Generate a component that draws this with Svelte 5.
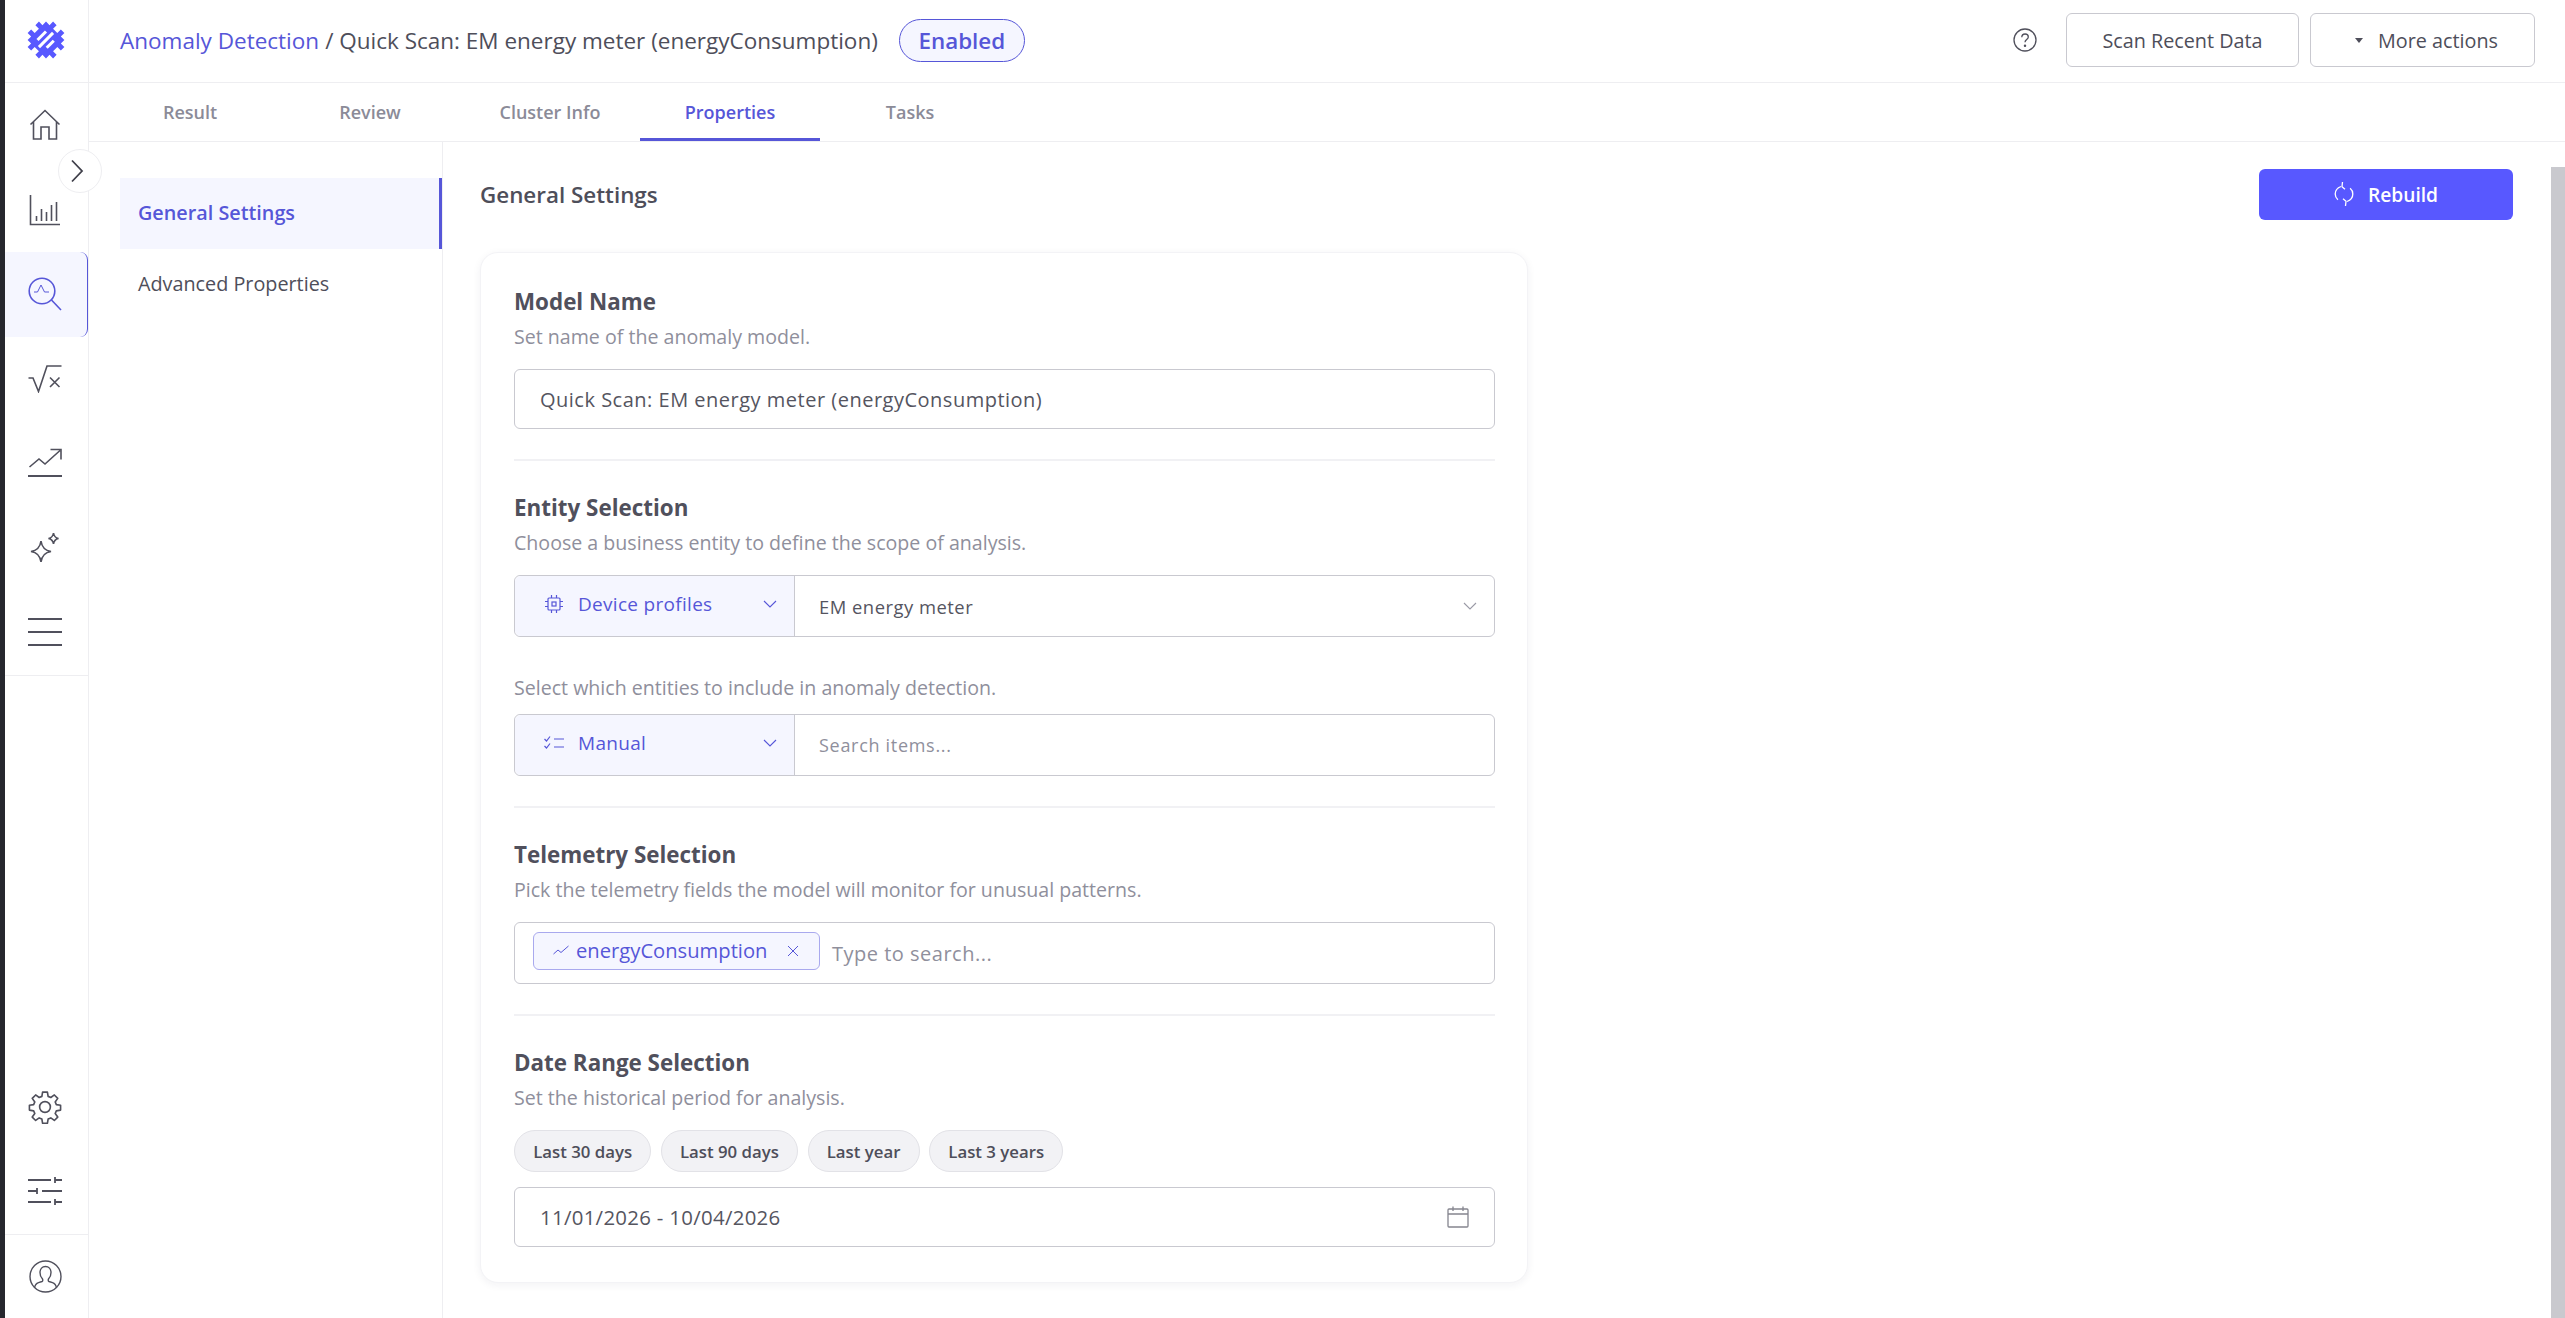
<script>
  const tabs = ['Result', 'Review', 'Cluster Info', 'Properties', 'Tasks'];
  const activeTab = 'Properties';
  const ranges = ['Last 30 days', 'Last 90 days', 'Last year', 'Last 3 years'];
</script>

<div class="app">
  <div class="edge"></div>

  <nav class="rail">
    <div class="logo">
      <svg width="38" height="38" viewBox="0 0 38 38">
        <g transform="rotate(45 19 19)">
          <path fill="#5858ff" d="M11 1h5v5h6V1h5v5h5v5h5v5h-5v6h5v5h-5v5h-5v5h-5v-5h-6v5h-5v-5H6v-5H1v-5h5v-6H1v-5h5V6h5z"/>
          <rect x="11.500" y="13" width="3" height="12" fill="#fff"/>
          <rect x="17.500" y="9" width="3" height="20" fill="#fff"/>
          <rect x="23.500" y="14" width="3" height="10" fill="#fff"/>
        </g>
      </svg>
    </div>
    <button class="rail-item">
      <svg width="32" height="32" viewBox="0 0 32 32" fill="none" stroke="#50505c" stroke-width="1.6">
        <path d="M1.500 15.500 16 1.500l14.500 14M4.500 13v17h7.500V18h8v12h7.500V13"/>
      </svg>
    </button>
    <button class="rail-item">
      <svg width="32" height="32" viewBox="0 0 32 32" fill="none" stroke="#50505c" stroke-width="1.6">
        <path d="M1.500 1v29.500h29.500"/>
        <path d="M7.500 27v-5M12.500 27V15M17.500 27v-9M22.500 27V11M27.500 27V8"/>
      </svg>
    </button>
    <button class="rail-item active">
      <svg width="34" height="34" viewBox="0 0 34 34" fill="none" stroke="#5656d8" stroke-width="1.6">
        <circle cx="14" cy="14" r="12.800"/>
        <path d="m23.500 23 9.500 10"/>
        <path d="M6 15h3.500l3.500-7 3.500 7H21" stroke-width="1"/>
      </svg>
    </button>
    <button class="rail-item">
      <svg width="34" height="28" viewBox="0 0 34 28" fill="none" stroke="#50505c" stroke-width="1.6">
        <path d="M0.500 13h4.500l5.500 13.500L19 1h14.500"/>
        <path d="m22 12.500 9.500 9.500M31.500 12.500 22 22"/>
      </svg>
    </button>
    <button class="rail-item">
      <svg width="34" height="30" viewBox="0 0 34 30" fill="none" stroke="#50505c" stroke-width="1.6">
        <path d="m1.500 19 9.500-8 6 5L32 2.500M22.500 1.500h10.500v10"/>
        <path d="M0 28h34" stroke-width="2"/>
      </svg>
    </button>
    <button class="rail-item">
      <svg width="32" height="31" viewBox="0 0 32 31" fill="none" stroke="#50505c" stroke-width="1.6">
        <path d="M12 9c.8 6 3.500 9.500 10 10.500-6.500 1-9.200 4.500-10 10.500-.8-6-3.500-9.500-10-10.500C8.500 18.500 11.200 15 12 9z"/>
        <path d="M24.500 1c.4 3 1.800 4.800 5 5.500-3.200.7-4.600 2.500-5 5.500-.4-3-1.800-4.800-5-5.500 3.200-.7 4.600-2.500 5-5.500z"/>
      </svg>
    </button>
    <button class="rail-item">
      <svg width="34" height="30" viewBox="0 0 34 30" fill="none" stroke="#50505c" stroke-width="2">
        <path d="M0 2h34M0 15h34M0 28h34"/>
      </svg>
    </button>
    <div class="rail-line"></div>

    <div class="rail-spacer"></div>

    <button class="rail-item">
      <svg width="34" height="34" viewBox="0 0 24 24" fill="none" stroke="#50505c" stroke-width="1.150" stroke-linejoin="round">
        <circle cx="12" cy="12" r="3.800"/>
        <path d="M10.300 1.500h3.400l.5 3 1.900.8 2.500-1.800 2.400 2.400-1.800 2.500.8 1.900 3 .5v3.400l-3 .5-.8 1.900 1.800 2.500-2.400 2.400-2.500-1.800-1.900.8-.5 3h-3.400l-.5-3-1.900-.8-2.500 1.800-2.400-2.400 1.800-2.500-.8-1.900-3-.5v-3.400l3-.5.8-1.900-1.800-2.500 2.400-2.400 2.500 1.800 1.900-.8z"/>
      </svg>
    </button>
    <button class="rail-item">
      <svg width="34" height="28" viewBox="0 0 34 28" fill="none" stroke="#50505c" stroke-width="1.800">
        <path d="M0 3h23M27 3h7M27 0v6"/>
        <path d="M0 14h9M9 11v6M14 14h20"/>
        <path d="M0 25h23M27 25h7M27 22v6"/>
      </svg>
    </button>
    <button class="rail-item profile">
      <svg width="33" height="33" viewBox="0 0 33 33" fill="none" stroke="#50505c" stroke-width="1.400">
        <circle cx="16.500" cy="16.500" r="15.500"/>
        <path d="M5.500 28c.5-3 1.500-4.500 4-5.300l3.500-1.200c1-.5 1-2 .2-3-1.500-1.500-2.200-3.500-2.200-6 0-3.500 2.200-6 5.500-6s5.500 2.500 5.500 6c0 2.500-.7 4.500-2.200 6-.8 1-.8 2.500.2 3l3.500 1.200c2.500.8 3.500 2.300 4 5.300"/>
      </svg>
    </button>
  </nav>

  <button class="expander" aria-label="Expand">
    <svg width="14" height="24" viewBox="0 0 14 24" fill="none" stroke="#3f3f4a" stroke-width="1.800">
      <path d="m2 1.500 10 10.500L2 22.500"/>
    </svg>
  </button>

  <div class="main">
    <header class="topbar">
      <div class="crumbs">
        <span class="crumb-link">Anomaly Detection</span>
        <span class="crumb-rest">/ Quick Scan: EM energy meter (energyConsumption)</span>
        <span class="status">Enabled</span>
      </div>
      <div class="actions">
        <svg class="help" width="24" height="24" viewBox="0 0 24 24" fill="none" stroke="#50505c" stroke-width="1.300">
          <circle cx="12" cy="12" r="11"/>
          <path d="M8.800 9.300c0-2 1.400-3.300 3.300-3.300s3.200 1.200 3.200 2.900c0 2.700-3.300 2.600-3.300 5.400"/>
          <circle cx="12" cy="17.800" r=".6" fill="#50505c"/>
        </svg>
        <button class="btn scan">Scan Recent Data</button>
        <button class="btn more"><span class="caret"></span>More actions</button>
      </div>
    </header>

    <div class="tabs">
      {#each tabs as tab}
        <div class="tab" class:current={tab === activeTab}>{tab}</div>
      {/each}
    </div>

    <div class="body">
      <aside class="side">
        <div class="side-item current">General Settings</div>
        <div class="side-item">Advanced Properties</div>
      </aside>

      <section class="content">
        <div class="content-head">
          <h2>General Settings</h2>
          <button class="rebuild">
            <svg width="20" height="26" viewBox="0 0 20 26" fill="none" stroke="#fff" stroke-width="1.300">
              <path d="M7 5.500C3.500 6.800 1.200 9.600 1.200 13c0 2.300 1 4.300 2.700 5.700M13 20.500c3.500-1.300 5.800-4.100 5.800-7.500 0-2.300-1-4.300-2.700-5.700"/>
              <path d="m8.500 1-.5 4.800 3 2.500M11.500 25l.5-4.800-3-2.500"/>
            </svg>
            Rebuild
          </button>
        </div>

        <div class="card">
          <div class="block">
            <h3>Model Name</h3>
            <p class="hint">Set name of the anomaly model.</p>
            <div class="field">Quick Scan: EM energy meter (energyConsumption)</div>
          </div>

          <div class="block">
            <h3>Entity Selection</h3>
            <p class="hint">Choose a business entity to define the scope of analysis.</p>
            <div class="combo">
              <div class="combo-type">
                <svg width="18" height="18" viewBox="0 0 18 18" fill="none" stroke="#5656d8" stroke-width="1.200">
                  <rect x="3" y="3" width="12" height="12" rx="1"/>
                  <rect x="7" y="7" width="4" height="4"/>
                  <path d="M6.500 0v3M11.500 0v3M6.500 15v3M11.500 15v3M0 6.500h3M0 11.500h3M15 6.500h3M15 11.500h3"/>
                </svg>
                <span>Device profiles</span>
                <svg class="chev" width="14" height="8" viewBox="0 0 14 8" fill="none" stroke="#5656d8" stroke-width="1.100"><path d="m1 1 6 6 6-6"/></svg>
              </div>
              <div class="combo-value">
                EM energy meter
                <svg class="chev" width="14" height="8" viewBox="0 0 14 8" fill="none" stroke="#9a9aa6" stroke-width="1.100"><path d="m1 1 6 6 6-6"/></svg>
              </div>
            </div>
            <p class="hint second">Select which entities to include in anomaly detection.</p>
            <div class="combo">
              <div class="combo-type">
                <svg width="20" height="14" viewBox="0 0 20 14" fill="none" stroke="#5656d8" stroke-width="1.200">
                  <path d="m0.500 3 2 2 3.500-4.500M0.500 10l2 2 3.500-4.500M10 3h10M10 11h10"/>
                </svg>
                <span>Manual</span>
                <svg class="chev" width="14" height="8" viewBox="0 0 14 8" fill="none" stroke="#5656d8" stroke-width="1.100"><path d="m1 1 6 6 6-6"/></svg>
              </div>
              <div class="combo-value placeholder">Search items...</div>
            </div>
          </div>

          <div class="block">
            <h3>Telemetry Selection</h3>
            <p class="hint">Pick the telemetry fields the model will monitor for unusual patterns.</p>
            <div class="tag-box">
              <span class="tag">
                <svg width="16" height="10" viewBox="0 0 16 10" fill="none" stroke="#5656d8" stroke-width="1"><path d="m0.500 9 4.500-4 3 2.500L15.500 1"/></svg>
                energyConsumption
                <svg class="tag-x" width="12" height="12" viewBox="0 0 12 12" fill="none" stroke="#5656d8" stroke-width="1"><path d="m1 1 10 10M11 1 1 11"/></svg>
              </span>
              <span class="tag-input">Type to search...</span>
            </div>
          </div>

          <div class="block last">
            <h3>Date Range Selection</h3>
            <p class="hint">Set the historical period for analysis.</p>
            <div class="ranges">
              {#each ranges as range}
                <span class="range">{range}</span>
              {/each}
            </div>
            <div class="field date">
              11/01/2026 - 10/04/2026
              <svg width="22" height="22" viewBox="0 0 22 22" fill="none" stroke="#85858f" stroke-width="1.300">
                <rect x="1" y="3" width="20" height="18" rx="1"/>
                <path d="M1 8h20M6 0.500V5M16 0.500V5"/>
              </svg>
            </div>
          </div>
        </div>
      </section>

      <div class="scrollbar"><div class="thumb"></div></div>
    </div>
  </div>
</div>

<style>
  :global(body) {
    margin: 0;
    background: #fff;
  }

  .app {
    display: flex;
    height: 1318px;
    overflow: hidden;
    position: relative;
    font-family: "Open Sans", sans-serif;
    color: #4e4e5a;
    background: #fff;
  }

  button {
    font-family: inherit;
    background: none;
    border: none;
    padding: 0;
    cursor: pointer;
  }

  .edge {
    flex: 0 0 5px;
    background: #26272e;
  }

  .rail {
    flex: 0 0 83px;
    display: flex;
    flex-direction: column;
    border-right: 1px solid #eeeef1;
    box-sizing: content-box;
  }

  .logo {
    height: 83px;
    flex: 0 0 83px;
    display: flex;
    align-items: center;
    justify-content: center;
    border-bottom: 1px solid #eeeef1;
    box-sizing: border-box;
    padding: 0 1px 2px 0;
  }

  .rail-item {
    flex: 0 0 84.500px;
    display: flex;
    align-items: center;
    justify-content: center;
    padding-right: 3px;
  }

  .rail-item.active {
    background: #f5f6ff;
    border-right: 1px solid #5656d8;
    border-radius: 0 8px 8px 0;
    padding-right: 2px;
  }

  .rail-item.profile {
    border-top: 1px solid #eeeef1;
  }

  .rail-line {
    height: 1px;
    background: #eeeef1;
  }

  .rail-spacer {
    flex: 1;
  }

  .expander {
    position: absolute;
    left: 58px;
    top: 149px;
    width: 44px;
    height: 44px;
    border-radius: 50%;
    background: #fff;
    border: 1px solid #eeeef1;
    display: flex;
    align-items: center;
    justify-content: center;
    box-sizing: border-box;
    padding-right: 6px;
    z-index: 2;
  }

  .main {
    flex: 1;
    min-width: 0;
    display: flex;
    flex-direction: column;
  }

  .topbar {
    flex: 0 0 83px;
    box-sizing: border-box;
    border-bottom: 1px solid #eeeef1;
    display: flex;
    align-items: center;
    justify-content: space-between;
    padding: 0 30px 2px 31px;
  }

  .crumbs {
    display: flex;
    align-items: center;
    font-size: 22.500px;
    white-space: nowrap;
  }

  .crumb-link {
    color: #5656d8;
  }

  .crumb-rest {
    margin-left: 6px;
  }

  .status {
    margin-left: 21px;
    width: 126px;
    height: 43px;
    box-sizing: border-box;
    border: 1px solid #5656d8;
    border-radius: 22px;
    background: #f5f6ff;
    color: #5656d8;
    font-size: 22.400px;
    font-weight: 600;
    display: flex;
    align-items: center;
    justify-content: center;
  }

  .actions {
    display: flex;
    align-items: center;
    gap: 11px;
  }

  .help {
    margin-right: 18px;
  }

  .btn {
    height: 54px;
    box-sizing: border-box;
    border: 1px solid #c9c9d0;
    border-radius: 6px;
    color: #4e4e5a;
    font-size: 19.800px;
    font-weight: 500;
    display: flex;
    align-items: center;
    justify-content: center;
    background: #fff;
  }

  .scan {
    width: 233px;
  }

  .more {
    width: 225px;
    justify-content: flex-start;
    padding-left: 44px;
  }

  .caret {
    width: 0;
    height: 0;
    border: 4.500px solid transparent;
    border-top: 5px solid #4e4e5a;
    border-bottom: 0;
    margin-right: 15px;
  }

  .tabs {
    flex: 0 0 58px;
    box-sizing: border-box;
    border-bottom: 1px solid #eeeef1;
    display: flex;
    padding-left: 11px;
  }

  .tab {
    width: 180px;
    box-sizing: border-box;
    height: 58px;
    display: flex;
    align-items: center;
    justify-content: center;
    color: #8b8b98;
    font-size: 18px;
    font-weight: 600;
  }

  .tab.current {
    color: #5656d8;
    border-bottom: 3px solid #5656d8;
    padding-top: 3px;
  }

  .body {
    flex: 1;
    display: flex;
    min-height: 0;
  }

  .side {
    flex: 0 0 354px;
    box-sizing: border-box;
    padding: 36px 0 0 31px;
    border-right: 1px solid #eeeef1;
  }

  .side-item {
    height: 71px;
    box-sizing: border-box;
    padding: 0 0 2px 18px;
    display: flex;
    align-items: center;
    font-size: 19.800px;
  }

  .side-item.current {
    background: #f5f6ff;
    color: #5656d8;
    font-weight: 600;
    border-right: 3px solid #5656d8;
  }

  .content {
    flex: 1;
    min-width: 0;
    padding: 26px 0 0 37px;
    box-sizing: border-box;
  }

  .content-head {
    display: flex;
    align-items: center;
    justify-content: space-between;
    height: 52px;
    padding-right: 37px;
  }

  h2 {
    margin: 0;
    font-size: 22.400px;
    font-weight: 600;
    color: #4e4e5a;
  }

  .rebuild {
    width: 254px;
    height: 51px;
    background: #5858ff;
    border-radius: 6px;
    color: #fff;
    font-size: 19.200px;
    font-weight: 600;
    display: flex;
    align-items: center;
    justify-content: center;
    gap: 14px;
  }

  .card {
    margin-top: 32px;
    width: 1048px;
    box-sizing: border-box;
    padding: 33px 32px 35px 33px;
    background: #fff;
    border: 1px solid #f3f3f6;
    border-radius: 18px;
    box-shadow: 0 2px 8px rgba(40, 40, 70, 0.06);
  }

  .block {
    padding-bottom: 30px;
    margin-bottom: 31px;
    border-bottom: 2px solid #f1f1f4;
  }

  .block.last {
    padding-bottom: 0;
    margin-bottom: 0;
    border-bottom: none;
  }

  h3 {
    margin: 0;
    font-size: 22.400px;
    line-height: 32px;
    font-weight: 700;
    color: #50505c;
  }

  .hint {
    margin: 3px 0 16px;
    font-size: 19.600px;
    line-height: 32px;
    color: #8f8f9c;
  }

  .hint.second {
    margin: 35px 0 10px;
  }

  .field {
    height: 60px;
    box-sizing: border-box;
    border: 1px solid #c9c9d0;
    border-radius: 6px;
    padding: 0 25px;
    display: flex;
    align-items: center;
    font-size: 20px;
    letter-spacing: 0.500px;
    color: #55555f;
  }

  .combo {
    display: flex;
    height: 62px;
    box-sizing: border-box;
    border: 1px solid #c9c9d0;
    border-radius: 6px;
  }

  .combo-type {
    flex: 0 0 280px;
    box-sizing: border-box;
    background: #f5f6ff;
    border-right: 1px solid #c9c9d0;
    border-radius: 6px 0 0 6px;
    color: #5656d8;
    font-size: 19px;
    letter-spacing: 0.300px;
    display: flex;
    align-items: center;
    padding: 0 17px 4px 29px;
  }

  .combo-type svg:first-child {
    flex: 0 0 20px;
  }

  .combo-type span {
    margin-left: 14px;
    flex: 1;
  }

  .combo-value {
    flex: 1;
    display: flex;
    align-items: center;
    justify-content: space-between;
    padding: 0 17px 0 24px;
    font-size: 18.400px;
    letter-spacing: 0.500px;
    color: #55555f;
  }

  .placeholder {
    color: #8f8f9c;
    letter-spacing: 0.700px;
    font-size: 18px;
  }

  .tag-box {
    height: 62px;
    box-sizing: border-box;
    border: 1px solid #c9c9d0;
    border-radius: 6px;
    display: flex;
    align-items: center;
    padding-left: 18px;
  }

  .tag {
    height: 38px;
    box-sizing: border-box;
    width: 287px;
    border: 1px solid #a9a9ee;
    border-radius: 6px;
    background: #f5f6ff;
    color: #5656d8;
    font-size: 20.200px;
    display: flex;
    align-items: center;
    padding: 0 0 3px 19px;
    gap: 7px;
    margin-bottom: 4px;
  }

  .tag-x {
    margin-left: 13px;
    margin-top: 3px;
  }

  .tag-input {
    margin-left: 12px;
    font-size: 20px;
    letter-spacing: 0.500px;
    color: #8f8f9c;
  }

  .ranges {
    display: flex;
    gap: 9.500px;
    margin-bottom: 15px;
  }

  .range {
    height: 42px;
    box-sizing: border-box;
    padding: 0 18.200px;
    border: 1px solid #e2e2e7;
    border-radius: 21px;
    background: #f2f2f5;
    font-size: 16.800px;
    font-weight: 600;
    color: #4e4e5a;
    display: flex;
    align-items: center;
  }

  .date {
    justify-content: space-between;
    padding-right: 25px;
    font-size: 20.400px;
    letter-spacing: 0.300px;
  }

  .scrollbar {
    flex: 0 0 15px;
    padding-top: 25px;
    box-sizing: border-box;
    background: #fff;
  }

  .thumb {
    height: 100%;
    background: #c9c9ce;
    margin-left: 1px;
  }
</style>
